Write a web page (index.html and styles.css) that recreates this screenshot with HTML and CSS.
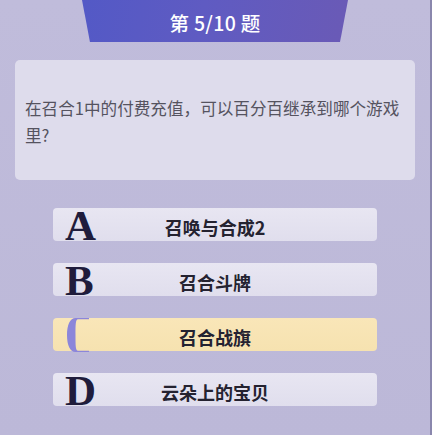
FILE: index.html
```html
<!DOCTYPE html>
<html lang="zh">
<head>
<meta charset="utf-8">
<link rel="stylesheet" href="styles.css">
</head>
<body>
<div class="page">
  <div class="banner"><span class="banner-text">第 5/10 题</span></div>
  <div class="question">
    <p class="question-text">在召合1中的付费充值，可以百分百继承到哪个游戏里?</p>
  </div>
  <div class="options">
    <div class="option">
      <span class="letter">A</span>
      <span class="label">召唤与合成2</span>
    </div>
    <div class="option">
      <span class="letter">B</span>
      <span class="label">召合斗牌</span>
    </div>
    <div class="option selected">
      <span class="letter letter-c">
        <svg width="24" height="36" viewBox="0 0 24 36">
          <path d="M23 1 H9.5 C4 1 1 8 1 18 C1 28 4 35 9.5 35 H23 V33.8 H12 C9.5 33.8 9.5 28 9.5 18 C9.5 8 9.5 2.2 12 2.2 H23 Z" fill="#8c86da"/>
        </svg>
      </span>
      <span class="label">召合战旗</span>
    </div>
    <div class="option">
      <span class="letter">D</span>
      <span class="label">云朵上的宝贝</span>
    </div>
  </div>
</div>
</body>
</html>
```
FILE: styles.css
```css
html, body {
  margin: 0;
  padding: 0;
}
body {
  background: #bebad9;
  font-family: "Noto Sans CJK SC", "Noto Sans", sans-serif;
}
.page {
  width: 430px;
  height: 435px;
  border-right: 2px solid #8a87ad;
  background: linear-gradient(180deg, #c0bcdb 0%, #bcb8d8 100%);
  overflow: hidden;
}
.banner {
  width: 266px;
  height: 42px;
  margin: 0 0 0 82px;
  clip-path: polygon(0 0, 100% 0, 97% 100%, 3% 100%);
  border-radius: 0 0 6px 6px;
  background: linear-gradient(100deg, #5359c6 0%, #5f5bc2 45%, #6a5ab6 100%);
  display: flex;
  align-items: center;
  justify-content: center;
}
.banner-text {
  color: #ffffff;
  font-size: 19.5px;
  font-weight: 500;
  letter-spacing: 0.3px;
  margin-top: 2px;
}
.question {
  margin: 18px 0 0 15px;
  width: 400px;
  height: 120px;
  box-sizing: border-box;
  padding: 0 10px;
  background: #dedcec;
  border-radius: 5px;
  display: flex;
  align-items: center;
}
.question-text {
  margin: 0;
  font-size: 16.6px;
  line-height: 27px;
  color: #55535f;
  padding-top: 4px;
}
.options {
  margin: 28px 0 0 53px;
  width: 324px;
  display: flex;
  flex-direction: column;
  gap: 22px;
}
.option {
  height: 33px;
  border-radius: 4px;
  background: linear-gradient(180deg, #e8e6f2 0%, #e0deed 100%);
  display: grid;
  grid-template-columns: 1fr auto 1fr;
  align-items: center;
}
.option.selected {
  background: linear-gradient(180deg, #f9e6b8 0%, #f6e2b0 100%);
}
.letter {
  justify-self: start;
  margin-left: 12px;
  font-family: "Liberation Serif", "DejaVu Serif", serif;
  font-weight: bold;
  font-size: 43px;
  line-height: 33px;
  height: 33px;
  color: #1f1c3c;
  transform: translateY(1px);
}
.letter-c {
  margin-left: 13px;
  transform: none;
  display: flex;
  align-items: center;
}
.label {
  font-size: 18px;
  font-weight: 600;
  color: #242230;
  margin-top: 4px;
}
```
